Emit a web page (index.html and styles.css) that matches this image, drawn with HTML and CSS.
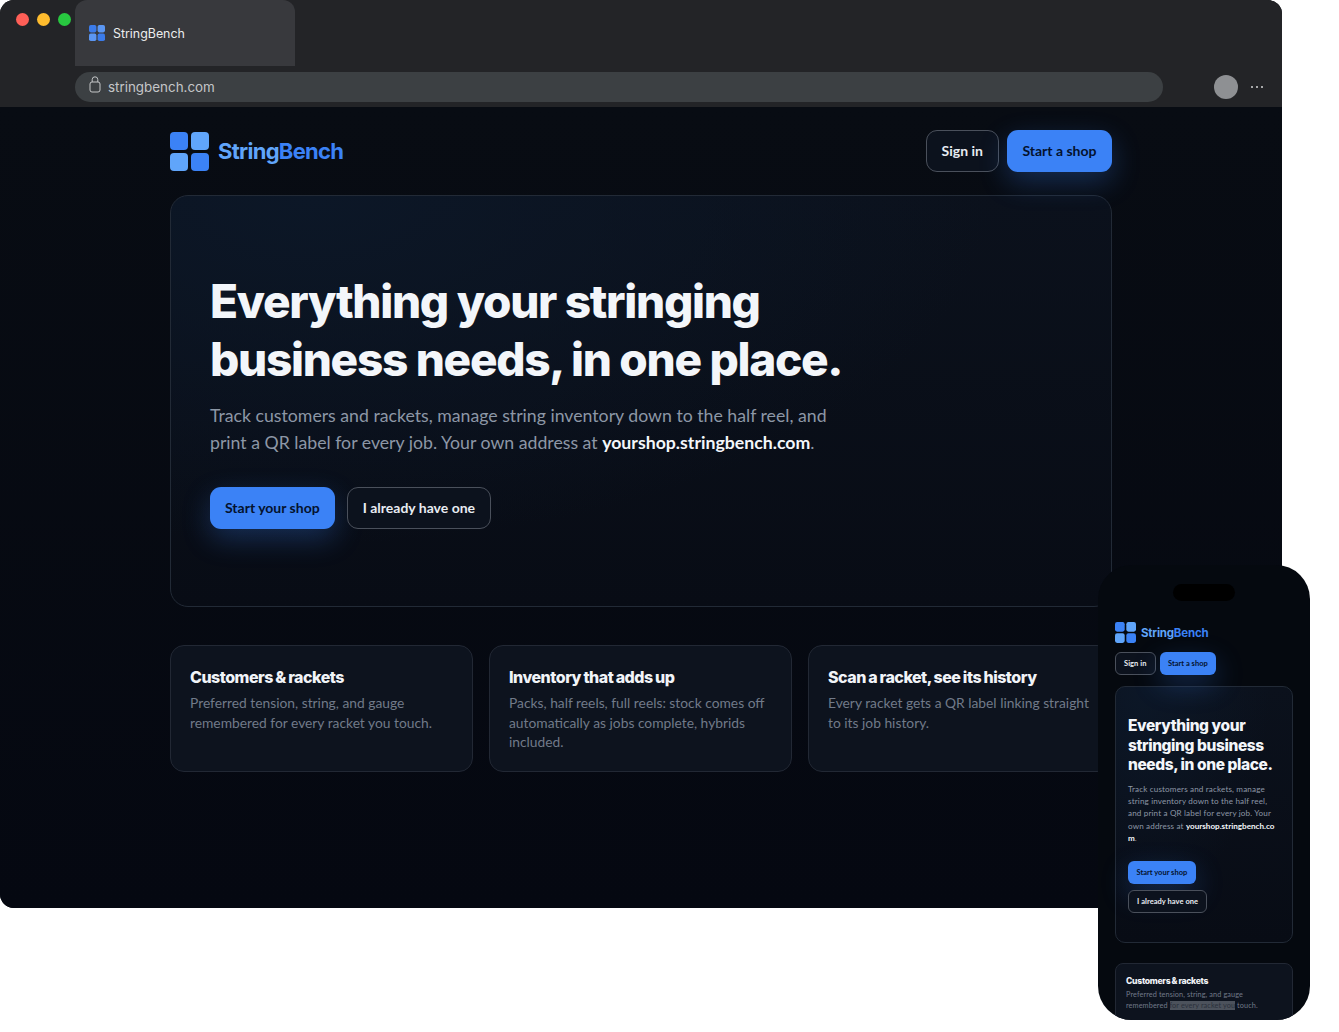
FILE: index.html
```html
<!DOCTYPE html>
<html lang="en">
<head>
  <meta charset="UTF-8">
  <title>StringBench</title>
  <link rel="stylesheet" href="styles.css">
</head>
<body>
  <div class="stage">
    <div class="browser">
      <div class="chrome">
        <div class="tabs">
          <div class="lights">
            <span class="light red"></span>
            <span class="light yellow"></span>
            <span class="light green"></span>
          </div>
          <div class="tab">
            <svg class="tab-logo" viewBox="0 0 16 16"><rect width="7.4" height="7.4" rx="1.8" fill="#3b7bea"/><rect x="8.6" width="7.4" height="7.4" rx="1.8" fill="#5b96f2"/><rect y="8.6" width="7.4" height="7.4" rx="1.8" fill="#5b96f2"/><rect x="8.6" y="8.6" width="7.4" height="7.4" rx="1.8" fill="#3b7bea"/></svg>
            <span>StringBench</span>
          </div>
        </div>
        <div class="toolbar">
          <div class="address">
            <svg class="lock" viewBox="0 0 12 17" fill="none" stroke="#c4c6c8" stroke-width="1"><rect x="1" y="6" width="10" height="10" rx="2"/><path d="M3.2 6V3.6a2.8 2.8 0 0 1 5.6 0V6"/></svg>
            <span>stringbench.com</span>
          </div>
          <span class="avatar"></span>
          <span class="dots"><i></i><i></i><i></i></span>
        </div>
      </div>
      <div class="site">
        <div class="wrap">
          <nav class="nav">
            <a class="brand">
              <svg class="brand-logo" viewBox="0 0 39 39"><rect width="18" height="18" rx="4" fill="#3b82f6"/><rect x="21" width="18" height="18" rx="4" fill="#60a5fa"/><rect y="21" width="18" height="18" rx="4" fill="#60a5fa"/><rect x="21" y="21" width="18" height="18" rx="4" fill="#3b82f6"/></svg>
              <span class="brand-name"><span class="lighter">String</span>Bench</span>
            </a>
            <div class="nav-btns">
              <a class="btn ghost">Sign in</a>
              <a class="btn primary">Start a shop</a>
            </div>
          </nav>
          <section class="hero">
            <h1>Everything your stringing business needs, in one place.</h1>
            <p>Track customers and rackets, manage string inventory down to the half reel, and print a QR label for every job. Your own address at <strong>yourshop.stringbench.com</strong>.</p>
            <div class="hero-btns">
              <a class="btn primary">Start your shop</a>
              <a class="btn ghost">I already have one</a>
            </div>
          </section>
          <section class="cards">
            <div class="card">
              <h3>Customers &amp; rackets</h3>
              <p>Preferred tension, string, and gauge remembered for every racket you touch.</p>
            </div>
            <div class="card">
              <h3>Inventory that adds up</h3>
              <p>Packs, half reels, full reels: stock comes off automatically as jobs complete, hybrids included.</p>
            </div>
            <div class="card">
              <h3>Scan a racket, see its history</h3>
              <p>Every racket gets a QR label linking straight to its job history.</p>
            </div>
          </section>
        </div>
      </div>
    </div>

    <div class="phone">
      <span class="notch"></span>
      <div class="phone-site">
        <a class="brand">
          <svg class="brand-logo" viewBox="0 0 39 39"><rect width="18" height="18" rx="4" fill="#3b82f6"/><rect x="21" width="18" height="18" rx="4" fill="#60a5fa"/><rect y="21" width="18" height="18" rx="4" fill="#60a5fa"/><rect x="21" y="21" width="18" height="18" rx="4" fill="#3b82f6"/></svg>
          <span class="brand-name"><span class="lighter">String</span>Bench</span>
        </a>
        <div class="nav-btns">
          <a class="btn ghost">Sign in</a>
          <a class="btn primary">Start a shop</a>
        </div>
        <section class="hero">
          <h1>Everything your stringing business needs, in one place.</h1>
          <p>Track customers and rackets, manage string inventory down to the half reel, and print a QR label for every job. Your own address at <strong>yourshop.stringbench.com</strong>.</p>
          <div class="hero-btns">
            <a class="btn primary">Start your shop</a>
            <a class="btn ghost">I already have one</a>
          </div>
        </section>
        <div class="card">
          <h3>Customers &amp; rackets</h3>
          <p>Preferred tension, string, and gauge remembered <span class="glitch">for every racket you</span> touch.</p>
        </div>
      </div>
    </div>
  </div>
</body>
</html>
```

FILE: styles.css
```css
* {
  box-sizing: border-box;
}
body {
  margin: 0;
  background-color: #fff;
  font-family: 'Lato', 'Noto Sans', sans-serif;
}
h1, h3, p {
  margin: 0;
}
.stage {
  position: relative;
  width: 1339px;
  height: 1032px;
  overflow: hidden;
}

/* browser window */
.browser {
  width: 1282px;
  height: 908px;
  border-radius: 14px;
  overflow: hidden;
  background-color: #05090f;
  display: flex;
  flex-direction: column;
}
.chrome {
  height: 107px;
  background-color: #232427;
  flex: none;
}
.tabs {
  height: 66px;
  display: flex;
}
.lights {
  width: 75px;
  padding: 13px 0 0 16px;
  display: flex;
  gap: 8px;
}
.light {
  width: 13px;
  height: 13px;
  border-radius: 50%;
}
.red { background-color: #fe5f57; }
.yellow { background-color: #febc2e; }
.green { background-color: #28c840; }
.tab {
  width: 220px;
  background-color: #38393d;
  border-radius: 12px 12px 0 0;
  display: flex;
  align-items: center;
  gap: 8px;
  padding-left: 14px;
  color: #eceded;
  font-family: 'Inter', sans-serif;
  font-size: 12.4px;
}
.tab-logo {
  width: 16px;
  height: 16px;
}
.toolbar {
  height: 41px;
  display: flex;
  padding: 6px 0 0 75px;
  background-color: #232427;
}
.address {
  width: 1088px;
  height: 30px;
  border-radius: 15px;
  background-color: #3c4043;
  display: flex;
  align-items: center;
  gap: 7px;
  padding-left: 14px;
  color: #c4c6c8;
  font-family: 'Inter', sans-serif;
  font-size: 13.4px;
}
.lock {
  width: 12px;
  height: 17px;
  margin-top: -5px;
}
.avatar {
  width: 24px;
  height: 24px;
  border-radius: 50%;
  background-color: #8e9093;
  margin: 3px 0 0 51px;
}
.dots {
  display: flex;
  gap: 3px;
  margin: 14px 0 0 13px;
}
.dots i {
  width: 2px;
  height: 2px;
  border-radius: 50%;
  background-color: #d4d5d6;
}

/* landing page */
.site {
  flex: 1;
  overflow: hidden;
  background: linear-gradient(#080c13, #050811);
}
.wrap {
  width: 942px;
  margin-left: 170px;
  padding-top: 23px;
}
.nav {
  height: 42px;
  display: flex;
  justify-content: space-between;
  align-items: center;
}
.brand {
  display: flex;
  align-items: center;
  gap: 9px;
}
.brand-logo {
  width: 39px;
  height: 39px;
}
.brand-name {
  font-family: 'Inter', sans-serif;
  font-weight: 700;
  font-size: 22px;
  letter-spacing: -0.72px;
  color: #3b82f6;
}
.lighter {
  color: #60a5fa;
}
.nav-btns {
  display: flex;
  gap: 8px;
}
.btn {
  height: 42px;
  display: inline-flex;
  align-items: center;
  padding: 0 14px 1px;
  border-radius: 11px;
  font-size: 14px;
  font-weight: 700;
  border: 1px solid transparent;
}
.nav .primary {
  padding: 0 14.5px 1px;
}
.ghost {
  padding: 0 15px 1px;
  color: #e8ecf2;
  background-color: #0c121d;
  border-color: #4a505b;
}
.primary {
  color: #04122e;
  background-color: #3b82f6;
  box-shadow: 0 10px 28px rgba(59, 130, 246, 0.28);
}
.hero {
  height: 412px;
  margin-top: 23px;
  padding: 76px 39px 0;
  border: 1px solid #222a36;
  border-radius: 18px;
  background: radial-gradient(ellipse at 15% 0%, #0c1727, transparent 60%), linear-gradient(#0b111c, #080c15);
}
.hero h1 {
  width: 700px;
  font-family: 'Inter', sans-serif;
  font-size: 46px;
  line-height: 58px;
  font-weight: 800;
  letter-spacing: -1.32px;
  color: #f3f6fa;
}
.hero p {
  width: 640px;
  margin-top: 14px;
  font-size: 17.7px;
  line-height: 27px;
  color: #8d97a6;
}
.hero strong {
  color: #f3f6fa;
  font-weight: 700;
}
.hero-btns {
  display: flex;
  gap: 12px;
  margin-top: 31px;
}
.cards {
  display: grid;
  grid-template-columns: repeat(3, 303px);
  gap: 16px;
  margin-top: 38px;
}
.card {
  height: 127px;
  padding: 20px 15px 20px 19px;
  border: 1px solid #222834;
  border-radius: 14px;
  background-color: #0d131e;
}
.card h3 {
  font-family: 'Inter', sans-serif;
  font-size: 16px;
  line-height: 22px;
  font-weight: 800;
  letter-spacing: -0.5px;
  word-spacing: -0.6px;
  color: #f1f4f8;
}
.card p {
  margin-top: 5px;
  font-size: 13.8px;
  line-height: 19.5px;
  color: #717a89;
}

/* phone mockup, lies over the browser */
.phone {
  position: absolute;
  left: 1098px;
  top: 565px;
  width: 212px;
  height: 455px;
  border-radius: 34px;
  overflow: hidden;
  background-color: #05090f;
}
.notch {
  position: absolute;
  left: 75px;
  top: 19px;
  width: 62px;
  height: 17px;
  border-radius: 9px;
  background-color: #000;
}
.phone-site {
  padding: 57px 17px 0;
}
.phone .brand {
  gap: 5px;
}
.phone .brand-logo {
  width: 21px;
  height: 21px;
}
.phone .brand-name {
  font-size: 11.5px;
  letter-spacing: -0.2px;
}
.phone .nav-btns {
  gap: 4px;
  margin-top: 9px;
}
.phone .btn {
  height: 23px;
  padding: 0 7.5px;
  border-radius: 6px;
  font-size: 7.5px;
}
.phone .ghost {
  padding: 0 8px;
  letter-spacing: 0.05px;
}
.phone .hero {
  width: 178px;
  height: 257px;
  margin-top: 11px;
  padding: 29px 12px 0 12px;
  border-radius: 10px;
}
.phone .hero h1 {
  width: auto;
  font-size: 15.5px;
  line-height: 19.5px;
  letter-spacing: -0.4px;
}
.phone .hero p {
  width: auto;
  margin-top: 8px;
  font-size: 8.1px;
  letter-spacing: 0.15px;
  line-height: 12.4px;
}
.phone .hero strong {
  letter-spacing: 0;
  word-break: break-all;
}
.phone .hero-btns {
  flex-direction: column;
  align-items: flex-start;
  gap: 6px;
  margin-top: 16px;
}
.phone .card {
  width: 178px;
  margin-top: 20px;
  padding: 11px 25px 0 10px;
  border-radius: 8px;
}
.phone .card h3 {
  font-size: 8.6px;
  line-height: 12px;
  letter-spacing: -0.3px;
  word-spacing: -0.3px;
}
.phone .card p {
  margin-top: 3px;
  font-size: 7.3px;
  letter-spacing: 0.1px;
  line-height: 10.5px;
}
.glitch {
  background-color: #4c525c;
  color: #2a303b;
}
```
